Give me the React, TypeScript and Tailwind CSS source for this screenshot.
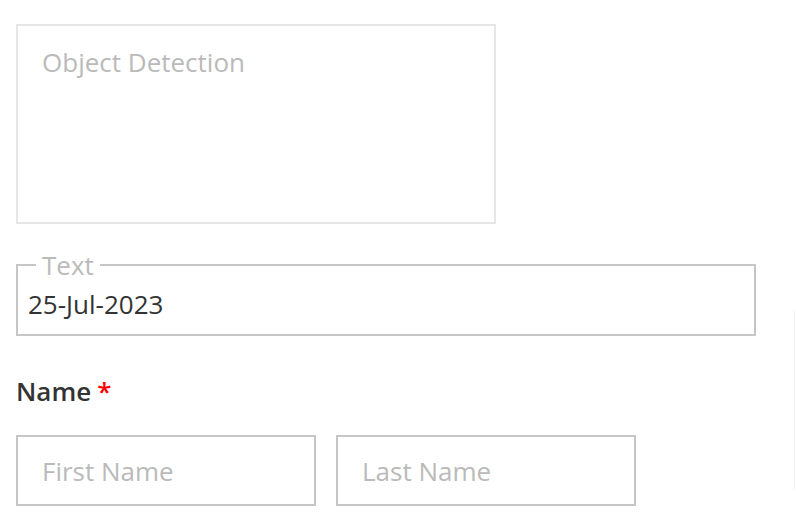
import React from "react";

export default function App() {
  const font = { fontFamily: '"Open Sans", "Noto Sans", sans-serif' };
  return (
    <div className="relative min-h-[526px] w-[796px] bg-white pl-4 pt-6" style={font}>
      <div className="h-[200px] w-[480px] border-2 border-[#e6e6e6] px-6 pt-[18px]">
        <div className="text-[26px] leading-[36px] text-[#bababa]">Object Detection</div>
      </div>

      <fieldset className="mt-[23px] w-[740px] border-2 border-[#c6c6c6] pb-[12px] pl-[10px]">
        <legend className="ml-2 px-[6px] text-[26px] leading-[36px] text-[#bababa]">Text</legend>
        <div className="pt-[3px] text-[26px] leading-[36px] text-[#333333]">25-Jul-2023</div>
      </fieldset>

      <div className="mt-[37px] flex items-baseline text-[26px] leading-[36px] font-semibold text-[#333333]">
        <span>Name</span>
        <span className="ml-[6px] text-[#ff0000]">*</span>
      </div>

      <div className="mt-[26px] flex gap-5">
        <div className="flex h-[71px] w-[300px] items-center border-2 border-[#c6c6c6] pl-6">
          <span className="text-[26px] leading-[36px] text-[#bababa]">First Name</span>
        </div>
        <div className="flex h-[71px] w-[300px] items-center border-2 border-[#c6c6c6] pl-6">
          <span className="text-[26px] leading-[36px] text-[#bababa]">Last Name</span>
        </div>
      </div>

      <div className="absolute left-[794px] top-[310px] h-[180px] w-[1px] bg-[#f2f2f2]" />
    </div>
  );
}
